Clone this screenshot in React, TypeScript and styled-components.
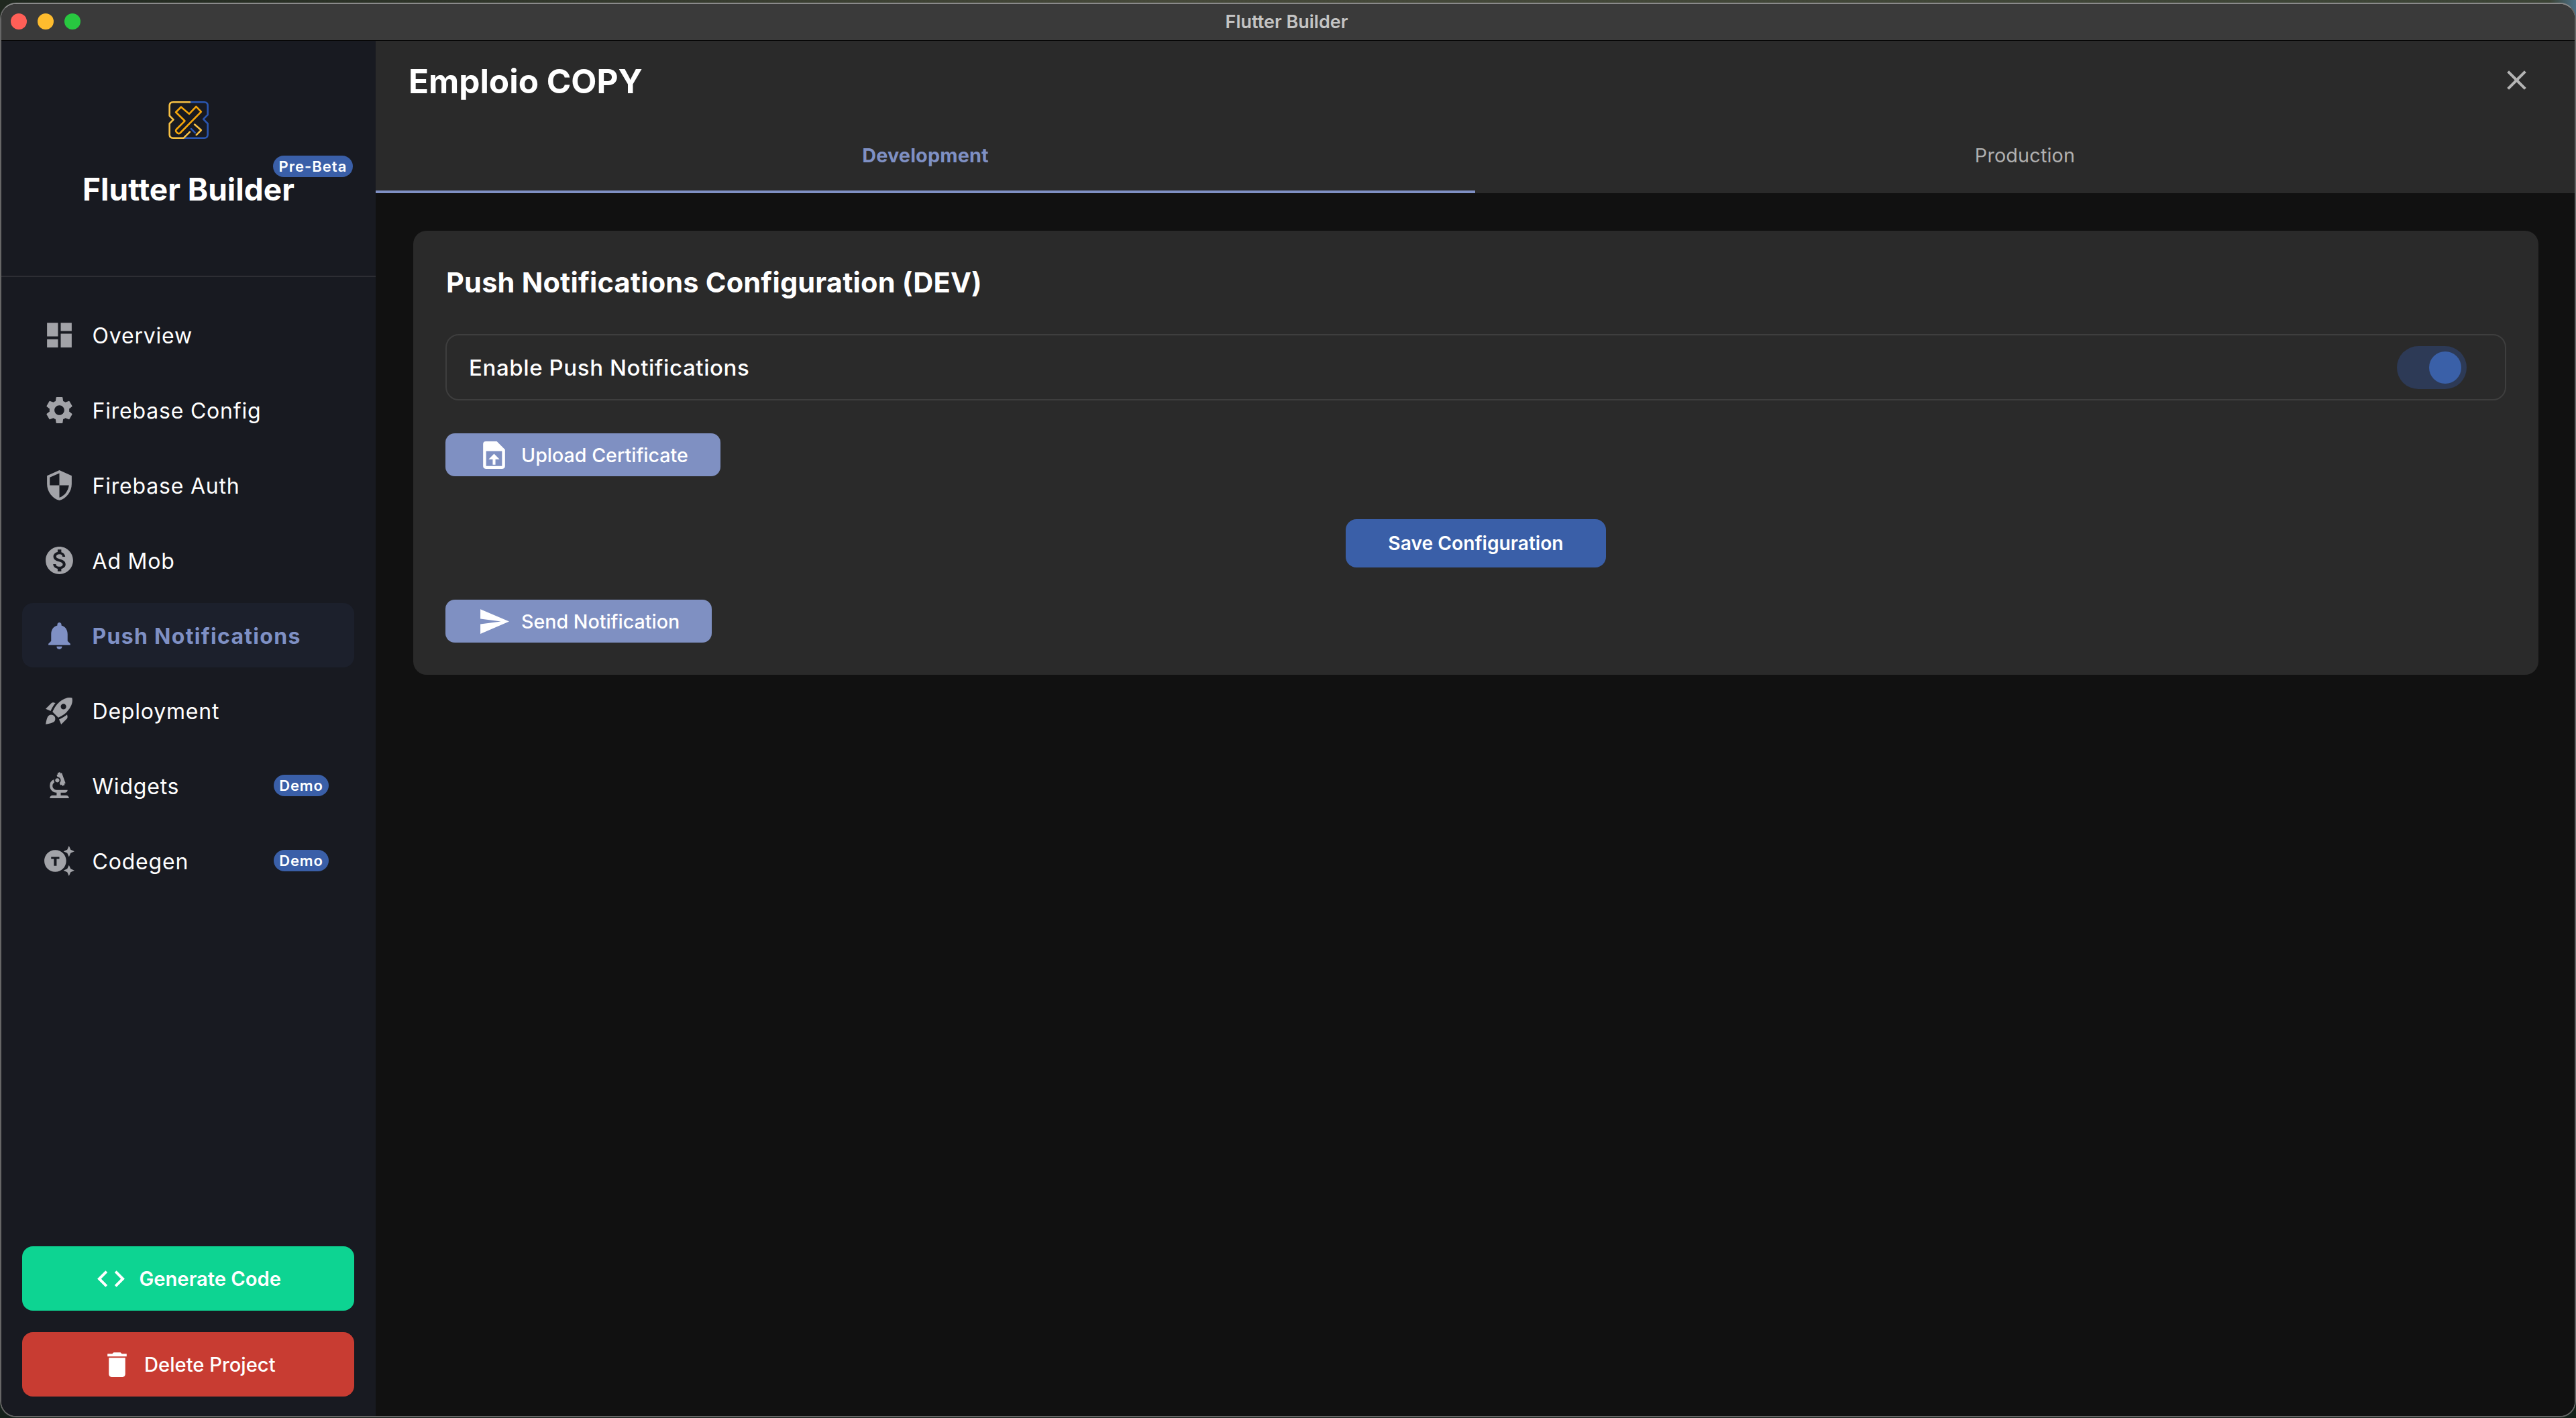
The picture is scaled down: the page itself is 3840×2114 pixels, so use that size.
import React from "react";
import styled, { createGlobalStyle } from "styled-components";
import {
  MdBiotech,
  MdClose,
  MdCode,
  MdDashboard,
  MdDelete,
  MdGeneratingTokens,
  MdMonetizationOn,
  MdNotifications,
  MdRocketLaunch,
  MdSecurity,
  MdSend,
  MdSettings,
} from "react-icons/md";
import { IconType } from "react-icons";

const GlobalStyle = createGlobalStyle`
  html, body {
    margin: 0;
    padding: 0;
    background: #1a231c;
  }
  * {
    box-sizing: border-box;
  }
`;

const Desktop = styled.div`
  width: 3840px;
  height: 2114px;
  padding-top: 4px;
  overflow: hidden;
  font-family: Inter, "Liberation Sans", sans-serif;
  background:
    linear-gradient(90deg, #20281f 0%, #46493a 45%, #3c4436 99%, #4d7188 100%) top / 100% 30px no-repeat,
    #14211a;
`;

const Window = styled.div`
  height: 2109px;
  display: flex;
  flex-direction: column;
  overflow: hidden;
  border: 2px solid #666;
  border-top-color: #8a8a8a;
  border-radius: 24px;
  background: #111;
`;

const TitleBar = styled.div`
  flex: none;
  height: 55px;
  display: grid;
  grid-template-columns: 1fr auto 1fr;
  align-items: center;
  padding: 0 18px 2px 14px;
  background: #3a3a3a;
  border-bottom: 1.5px solid #000;
`;

const Lights = styled.div`
  display: flex;
  gap: 16px;
`;

const Light = styled.span<{ $color: string }>`
  width: 24px;
  height: 24px;
  border-radius: 50%;
  background: ${(p) => p.$color};
`;

const WindowTitle = styled.div`
  font-size: 27px;
  font-weight: 600;
  color: #c4c4c4;
`;

const Body = styled.div`
  flex: 1;
  min-height: 0;
  display: flex;
`;

const Sidebar = styled.aside`
  flex: none;
  width: 558px;
  display: flex;
  flex-direction: column;
  background: #181a21;
`;

const Brand = styled.div`
  flex: none;
  height: 352px;
  padding-top: 90px;
  display: flex;
  flex-direction: column;
  align-items: center;
  border-bottom: 2px solid #2d2e34;
`;

const BrandName = styled.h1`
  position: relative;
  margin: 45px 0 0;
  font-size: 46px;
  line-height: 60px;
  font-weight: 700;
  color: #fff;
`;

const BetaBadge = styled.span`
  position: absolute;
  top: -20px;
  right: -87px;
  height: 32px;
  width: 119px;
  display: flex;
  align-items: center;
  justify-content: center;
  border-radius: 16px;
  background: #3a5fa8;
  font-size: 22px;
  font-weight: 600;
  letter-spacing: 1px;
  color: #fff;
`;

const Nav = styled.nav`
  display: flex;
  flex-direction: column;
  gap: 16px;
  padding: 38px 32px 0 30.5px;
`;

const NavItem = styled.div<{ $active?: boolean }>`
  height: 96px;
  display: flex;
  align-items: center;
  gap: 25px;
  padding: 0 38px 0 31px;
  border-radius: 16px;
  background: ${(p) => (p.$active ? "#1c202c" : "transparent")};
  color: ${(p) => (p.$active ? "#7f90c4" : "#fff")};
  font-size: 32px;
  font-weight: ${(p) => (p.$active ? 700 : 400)};
  letter-spacing: ${(p) => (p.$active ? 1.3 : 0.8)}px;

  svg {
    flex: none;
    color: ${(p) => (p.$active ? "#7f90c4" : "#a2a3a8")};
  }
`;

const NavLabel = styled.span`
  padding-top: 2px;
`;

const DemoBadge = styled.span`
  margin-left: auto;
  width: 82px;
  height: 32px;
  display: flex;
  align-items: center;
  justify-content: center;
  border-radius: 16px;
  background: #3a5fa8;
  font-size: 22px;
  font-weight: 600;
  letter-spacing: 0.8px;
  color: #fff;
`;

const SideActions = styled.div`
  margin-top: auto;
  display: flex;
  flex-direction: column;
  gap: 32px;
  padding: 0 32px 29px 30.5px;
`;

const ActionButton = styled.button<{ $bg: string; $gap: number; $weight: number }>`
  height: 96px;
  display: flex;
  align-items: center;
  justify-content: center;
  gap: ${(p) => p.$gap}px;
  border: 0;
  border-radius: 16px;
  background: ${(p) => p.$bg};
  color: #fff;
  font-family: inherit;
  font-size: 29.2px;
  font-weight: ${(p) => p.$weight};
`;

const Main = styled.main`
  flex: 1;
  min-width: 0;
  display: flex;
  flex-direction: column;
`;

const Header = styled.header`
  flex: none;
  background: #2a2a2a;
`;

const HeaderTop = styled.div`
  height: 117px;
  display: flex;
  align-items: center;
  justify-content: space-between;
  padding: 0 62px 0 49px;
  color: #b4b4b4;
`;

const ProjectTitle = styled.h2`
  margin: 2px 0 0;
  font-size: 49.5px;
  font-weight: 700;
  color: #fff;
`;

const Tabs = styled.div`
  display: grid;
  grid-template-columns: 1fr 1fr;
`;

const Tab = styled.div<{ $active?: boolean }>`
  height: 110px;
  display: flex;
  align-items: center;
  justify-content: center;
  border-bottom: 4px solid ${(p) => (p.$active ? "#7f90c4" : "transparent")};
  color: ${(p) => (p.$active ? "#7f90c4" : "#b0b0b0")};
  font-size: 28.8px;
  font-weight: ${(p) => (p.$active ? 700 : 400)};
  letter-spacing: 0.15px;
`;

const Content = styled.div`
  flex: 1;
  padding: 56px 54px 0 56px;
  background: #111;
`;

const Card = styled.section`
  height: 662px;
  padding: 48px 48px 0 48px;
  border-radius: 20px;
  background: #2a2a2a;
`;

const CardTitle = styled.h3`
  margin: 0 0 48px;
  padding-left: 1px;
  font-size: 41.5px;
  line-height: 58px;
  font-weight: 700;
  letter-spacing: 0.2px;
  color: #fff;
`;

const ToggleRow = styled.div`
  height: 99px;
  display: flex;
  align-items: center;
  justify-content: space-between;
  padding: 0 57px 0 33px;
  border: 2px solid #3e3e3e;
  border-radius: 20px;
  font-size: 33px;
  font-weight: 500;
  letter-spacing: 0.6px;
  color: #fff;
`;

const SwitchTrack = styled.div`
  width: 104px;
  height: 64px;
  display: flex;
  align-items: center;
  justify-content: flex-end;
  padding-right: 8px;
  border-radius: 32px;
  background: #2d3a56;
`;

const SwitchKnob = styled.span`
  width: 48px;
  height: 48px;
  border-radius: 50%;
  background: #3a60a8;
`;

const SecondaryButton = styled.button<{ $width: number; $top: number }>`
  width: ${(p) => p.$width}px;
  height: 64px;
  margin-top: ${(p) => p.$top}px;
  display: flex;
  align-items: center;
  gap: 16px;
  padding: 0 0 0 48px;
  border: 0;
  border-radius: 14px;
  background: #7f90c2;
  color: #fff;
  font-family: inherit;
  font-size: 28.6px;
  font-weight: 500;
`;

const SaveRow = styled.div`
  margin-top: 64px;
  display: flex;
  justify-content: center;
`;

const SaveButton = styled.button`
  width: 388px;
  height: 72px;
  border: 0;
  border-radius: 16px;
  background: #3a5fa8;
  color: #fff;
  font-family: inherit;
  font-size: 28.2px;
  font-weight: 600;
`;

const Logo = () => (
  <svg width="60" height="56" viewBox="30 18 184 172" fill="none" strokeWidth="8" strokeLinejoin="round" strokeLinecap="round">
    <path d="M128 22H194Q210 22 210 38V80L190 100L210 120V170Q210 186 194 186H100" stroke="#2a56b0" />
    <path d="M128 22H52Q35 22 35 38V84L53 102L35 120V170Q35 186 52 186H100L128 158" stroke="#f6c044" />
    <path d="M88 44L64 68L105 108L66 147Q62 152 66 158L72 164Q77 168 83 164L180 66L157 42L125 76Z" stroke="#f5a60a" />
    <path d="M134 144L152 162" stroke="#2a56b0" />
    <path d="M150 124L180 150L158 172" stroke="#f6c044" />
  </svg>
);

// solid-topped document with a cut-out panel, react-icons only has the outlined one
const UploadDocIcon = () => (
  <svg width="49" height="49" viewBox="0 0 24 24" fill="#fff">
    <path
      fillRule="evenodd"
      d="M6 2h8l6 6v12a2 2 0 0 1-2 2H6a2 2 0 0 1-2-2V4a2 2 0 0 1 2-2zM6.2 9v11h11.6V9z"
    />
    <path d="M12 11l4 4h-3v4h-2v-4H8z" />
  </svg>
);

type NavEntry = { label: string; icon: IconType; active?: boolean; demo?: boolean };

const links: NavEntry[] = [
  { label: "Overview", icon: MdDashboard },
  { label: "Firebase Config", icon: MdSettings },
  { label: "Firebase Auth", icon: MdSecurity },
  { label: "Ad Mob", icon: MdMonetizationOn },
  { label: "Push Notifications", icon: MdNotifications, active: true },
  { label: "Deployment", icon: MdRocketLaunch },
  { label: "Widgets", icon: MdBiotech, demo: true },
  { label: "Codegen", icon: MdGeneratingTokens, demo: true },
];

const App: React.FC = () => (
  <Desktop>
    <GlobalStyle />
    <Window>
      <TitleBar>
        <Lights>
          <Light $color="#ff5f57" />
          <Light $color="#febc2e" />
          <Light $color="#28c840" />
        </Lights>
        <WindowTitle>Flutter Builder</WindowTitle>
      </TitleBar>
      <Body>
        <Sidebar>
          <Brand>
            <Logo />
            <BrandName>
              Flutter Builder
              <BetaBadge>Pre-Beta</BetaBadge>
            </BrandName>
          </Brand>
          <Nav>
            {links.map((entry) => {
              const IconElement = entry.icon;
              return (
                <NavItem key={entry.label} $active={entry.active}>
                  <IconElement size={49} />
                  <NavLabel>{entry.label}</NavLabel>
                  {entry.demo && <DemoBadge>Demo</DemoBadge>}
                </NavItem>
              );
            })}
          </Nav>
          <SideActions>
            <ActionButton $bg="#0dd492" $gap={17} $weight={600}>
              <MdCode size={49} />
              Generate Code
            </ActionButton>
            <ActionButton $bg="#c83c32" $gap={16} $weight={500}>
              <MdDelete size={49} />
              Delete Project
            </ActionButton>
          </SideActions>
        </Sidebar>
        <Main>
          <Header>
            <HeaderTop>
              <ProjectTitle>Emploio COPY</ProjectTitle>
              <MdClose size={49} />
            </HeaderTop>
            <Tabs>
              <Tab $active>Development</Tab>
              <Tab>Production</Tab>
            </Tabs>
          </Header>
          <Content>
            <Card>
              <CardTitle>Push Notifications Configuration (DEV)</CardTitle>
              <ToggleRow>
                Enable Push Notifications
                <SwitchTrack>
                  <SwitchKnob />
                </SwitchTrack>
              </ToggleRow>
              <SecondaryButton $width={410} $top={49}>
                <UploadDocIcon />
                Upload Certificate
              </SecondaryButton>
              <SaveRow>
                <SaveButton>Save Configuration</SaveButton>
              </SaveRow>
              <SecondaryButton $width={397} $top={48}>
                <MdSend size={49} />
                Send Notification
              </SecondaryButton>
            </Card>
          </Content>
        </Main>
      </Body>
    </Window>
  </Desktop>
);

export default App;
